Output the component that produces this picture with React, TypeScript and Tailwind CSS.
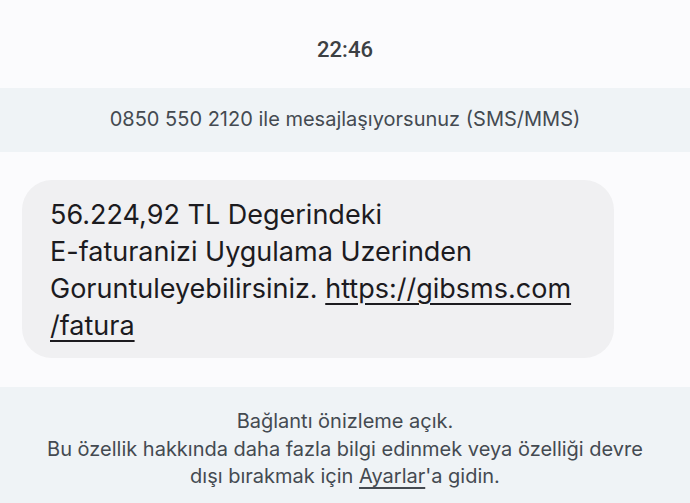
import React from "react";

export default function App() {
  return (
    <div className="w-[690px] h-[503px] overflow-hidden bg-[#fbfbfd] flex flex-col font-['Inter','Roboto',sans-serif]">
      <div className="h-[88px] flex justify-center pt-[33px]">
        <span className="font-['Roboto',sans-serif] text-[22px] leading-[33px] font-medium text-[#3c4043] h-[33px]">22:46</span>
      </div>
      <div className="h-[64px] bg-[#eff3f6] flex items-center justify-center pb-[2px]">
        <span className="text-[20px] leading-[30px] text-[#444a51]">0850 550 2120 ile mesajlaşıyorsunuz (SMS/MMS)</span>
      </div>
      <div className="pt-[28px] pl-[22px]">
        <div className="w-[592px] h-[178px] rounded-[30px] bg-[#f0f0f2] pl-[28px] pt-[16px] text-[27px] leading-[37px] text-[#1c1b1f]">
          <div>56.224,92 TL Degerindeki</div>
          <div>E-faturanizi Uygulama Uzerinden</div>
          <div>
            Goruntuleyebilirsiniz. <span className="underline decoration-[2px] underline-offset-[5px]">https://gibsms.com</span>
          </div>
          <div>
            <span className="underline decoration-[2px] underline-offset-[5px]">/fatura</span>
          </div>
        </div>
      </div>
      <div className="mt-[29px] flex-1 bg-[#eff3f6] flex flex-col items-center pt-[21px] text-[20px] leading-[27.5px] text-[#444a51] text-center">
        <div>Bağlantı önizleme açık.</div>
        <div>Bu özellik hakkında daha fazla bilgi edinmek veya özelliği devre</div>
        <div>
          dışı bırakmak için <span className="underline underline-offset-[4px]">Ayarlar</span>'a gidin.
        </div>
      </div>
    </div>
  );
}
